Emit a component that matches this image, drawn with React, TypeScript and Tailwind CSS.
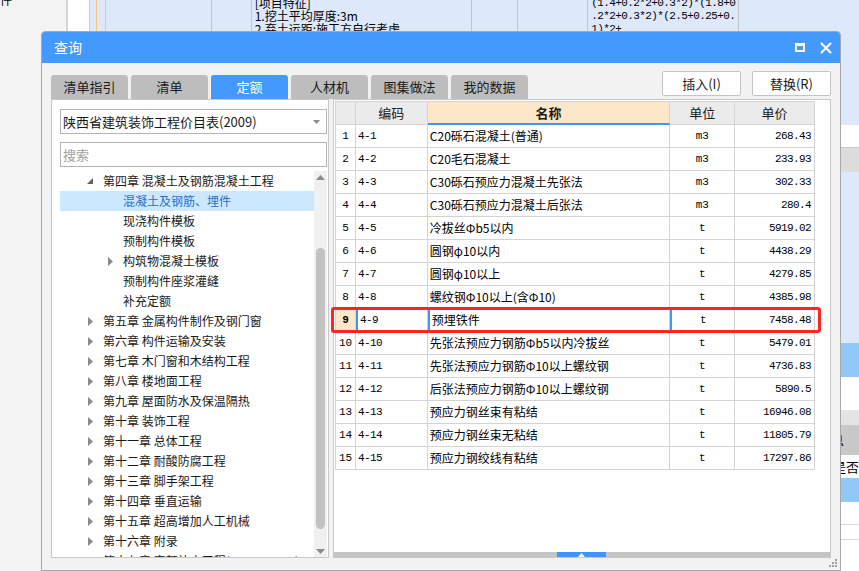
import React from "react";

const rows = [
  ["1", "4-1", "C20砾石混凝土(普通)", "m3", "268.43"],
  ["2", "4-2", "C20毛石混凝土", "m3", "233.93"],
  ["3", "4-3", "C30砾石预应力混凝土先张法", "m3", "302.33"],
  ["4", "4-4", "C30砾石预应力混凝土后张法", "m3", "280.4"],
  ["5", "4-5", "冷拔丝Φb5以内", "t", "5919.02"],
  ["6", "4-6", "圆钢φ10以内", "t", "4438.29"],
  ["7", "4-7", "圆钢φ10以上", "t", "4279.85"],
  ["8", "4-8", "螺纹钢Φ10以上(含Φ10)", "t", "4385.98"],
  ["9", "4-9", "预埋铁件", "t", "7458.48"],
  ["10", "4-10", "先张法预应力钢筋Φb5以内冷拔丝", "t", "5479.01"],
  ["11", "4-11", "先张法预应力钢筋Φ10以上螺纹钢", "t", "4736.83"],
  ["12", "4-12", "后张法预应力钢筋Φ10以上螺纹钢", "t", "5890.5"],
  ["13", "4-13", "预应力钢丝束有粘结", "t", "16946.08"],
  ["14", "4-14", "预应力钢丝束无粘结", "t", "11805.79"],
  ["15", "4-15", "预应力钢绞线有粘结", "t", "17297.86"],
];

const tree: { text: string; level: number; arrow?: "open" | "closed"; selected?: boolean }[] = [
  { text: "第四章 混凝土及钢筋混凝土工程", level: 0, arrow: "open" },
  { text: "混凝土及钢筋、埋件", level: 1, selected: true },
  { text: "现浇构件模板", level: 1 },
  { text: "预制构件模板", level: 1 },
  { text: "构筑物混凝土模板", level: 1, arrow: "closed" },
  { text: "预制构件座浆灌缝", level: 1 },
  { text: "补充定额", level: 1 },
  { text: "第五章 金属构件制作及钢门窗", level: 0, arrow: "closed" },
  { text: "第六章 构件运输及安装", level: 0, arrow: "closed" },
  { text: "第七章 木门窗和木结构工程", level: 0, arrow: "closed" },
  { text: "第八章 楼地面工程", level: 0, arrow: "closed" },
  { text: "第九章 屋面防水及保温隔热", level: 0, arrow: "closed" },
  { text: "第十章 装饰工程", level: 0, arrow: "closed" },
  { text: "第十一章 总体工程", level: 0, arrow: "closed" },
  { text: "第十二章 耐酸防腐工程", level: 0, arrow: "closed" },
  { text: "第十三章 脚手架工程", level: 0, arrow: "closed" },
  { text: "第十四章 垂直运输", level: 0, arrow: "closed" },
  { text: "第十五章 超高增加人工机械", level: 0, arrow: "closed" },
  { text: "第十六章 附录", level: 0, arrow: "closed" },
  { text: "第十七章 定额补充工程(2014、2016)", level: 0, arrow: "closed" },
];

const tabs = ["清单指引", "清单", "定额", "人材机", "图集做法", "我的数据"];

const ui = { fontFamily: '"Noto Sans CJK SC", "Noto Sans", sans-serif' };
const grid = { fontFamily: '"Liberation Mono", "Noto Sans CJK SC", monospace' };

function Background() {
  return (
    <div className="flex h-full w-full text-[12px] text-black" style={ui}>
      <div className="w-[68px] bg-[#f3f3f3] border-r-2 border-[#d4d4d4] leading-none">
        <div className="-mt-[6px]">件</div>
      </div>
      <div className="w-[22px] bg-white border-r border-[#c8c8c8]" />
      <div className="w-[7px] bg-[#dde8fa] border-r border-[#f7c27a]" />
      <div className="w-[9px] bg-[#dde8fa] border-r border-[#f7c27a]" />
      <div className="w-[106px] bg-[#dde8fa] border-r border-[#c4c4c4]" />
      <div className="w-[40px] bg-[#dde8fa] border-r border-[#c4c4c4]" />
      <div className="w-[221px] bg-[#dde8fa] border-r border-[#c4c4c4] pl-[3px] leading-[13px] pt-[-2px]">
        <div className="-mt-[4px]">[项目特征]</div>
        <div>1.挖土平均厚度:3m</div>
        <div>2.弃土运距:施工方自行考虑</div>
      </div>
      <div className="w-[46px] bg-[#dde8fa] border-r border-[#c4c4c4]" />
      <div className="w-[70px] bg-[#dde8fa] border-r border-[#c4c4c4]" />
      <div className="w-[151px] bg-[#dde8fa] border-r border-[#c4c4c4] pl-[3px] text-[11px] leading-[13px] tracking-[-0.6px]" style={grid}>
        <div className="-mt-[3px]">(1.4+0.2*2+0.3*2)*(1.8+0</div>
        <div>.2*2+0.3*2)*(2.5+0.25+0.</div>
        <div>1)*2+</div>
      </div>
      <div className="flex-1 flex flex-col">
        <div className="h-[125px] bg-[#dde8fa]" />
        <div className="h-[23px] bg-white border-b border-[#c8c8c8]" />
        <div className="h-[24px] bg-[#dcdcdc]" />
        <div className="h-[171px] bg-[#dde8fa]" />
        <div className="h-[34px] bg-[#90c8f8]" />
        <div className="h-[33px] bg-white" />
        <div className="h-[15px] bg-[#e4e4e4]" />
        <div className="h-[30px] bg-[#c8c8c8] pl-[92px] leading-[30px] text-[13px]">息</div>
        <div className="h-[23px] bg-white pl-[94px] leading-[23px] text-[13px] whitespace-nowrap overflow-hidden">是否</div>
        <div className="h-[24px] bg-[#90c8f8]" />
        <div className="h-[23px] bg-white border-b border-[#d8d8d8]" />
        <div className="h-[15px] bg-white border-b border-[#d8d8d8]" />
        <div className="flex-1 bg-white" />
      </div>
    </div>
  );
}

function TreePanel() {
  return (
    <div className="w-[278px] h-full bg-white border border-[#c8c8c8] flex flex-col pl-[8px] pr-[1px]">
      <div className="mt-[9px] h-[25px] border border-[#b4b4b4] flex items-center justify-between pl-[2px] pr-[6px] text-[13px] text-[#1a1a1a]">
        <span>陕西省建筑装饰工程价目表(2009)</span>
        <svg width="7" height="4" viewBox="0 0 7 4"><path d="M0 0 L7 0 L3.5 4 Z" fill="#8a8a8a" /></svg>
      </div>
      <div className="mt-[8px] h-[25px] border border-[#b4b4b4] flex items-center pl-[2px] text-[13px] text-[#a0a0a0]">搜索</div>
      <div className="flex-1 flex mt-[4px] overflow-hidden">
        <div className="flex-1 overflow-hidden">
          {tree.map((t, i) => (
            <div
              key={i}
              className={`h-[20px] flex items-center text-[12px] whitespace-nowrap ${t.selected ? "bg-[#cce8ff] text-[#2a6fc9]" : "text-[#1a1a1a]"}`}
            >
              <div className={`${t.level === 0 ? "w-[43px]" : "w-[63px]"} flex justify-end pr-[10px] shrink-0`}>
                {t.arrow === "open" && (
                  <svg width="6" height="6" viewBox="0 0 6 6"><path d="M6 0 L6 6 L0 6 Z" fill="#606060" /></svg>
                )}
                {t.arrow === "closed" && (
                  <svg width="5" height="9" viewBox="0 0 5 9"><path d="M0 0 L5 4.5 L0 9 Z" fill="#8a8a8a" /></svg>
                )}
              </div>
              <span>{t.text}</span>
            </div>
          ))}
        </div>
        <div className="w-[13px] bg-[#f0f0f0] flex flex-col items-center">
          <svg className="mt-[4px]" width="9" height="5" viewBox="0 0 9 5"><path d="M0 5 L4.5 0 L9 5 Z" fill="#8a8a8a" /></svg>
          <div className="mt-[68px] w-[9px] h-[281px] rounded-[5px] bg-[#c2c2c2]" />
          <div className="flex-1" />
          <svg className="mb-[3px]" width="9" height="5" viewBox="0 0 9 5"><path d="M0 0 L4.5 5 L9 0 Z" fill="#8a8a8a" /></svg>
        </div>
      </div>
    </div>
  );
}

function GridPanel() {
  const cell = "border-r border-b border-[#d4d4d4] h-[23px] flex items-center";
  return (
    <div className="relative w-[498px] h-full bg-white border border-[#c8c8c8] flex flex-col">
      <div className="pt-[1px] pl-[1px] flex-1">
        <div className="flex w-[480px] text-[13px] text-[#1a1a1a] border-l border-t border-[#d4d4d4]" style={ui}>
          <div className={`${cell} w-[20px] bg-[#ebebeb]`} />
          <div className={`${cell} w-[72px] bg-[#ebebeb] justify-center`}>编码</div>
          <div className={`w-[243px] h-[23px] bg-[#fde7c9] border-r border-[#d4d4d4] border-b-2 border-b-[#3d96f8] flex items-center justify-center font-bold`}>名称</div>
          <div className={`${cell} w-[65px] bg-[#ebebeb] justify-center`}>单位</div>
          <div className={`${cell} w-[80px] bg-[#ebebeb] justify-center`}>单价</div>
        </div>
        {rows.map((r) => {
          const sel = r[0] === "9";
          return (
            <div key={r[0]} className="flex w-[480px] text-[12px] text-black border-l border-[#d4d4d4]">
              <div className={`${cell} w-[20px] justify-center text-[11px] ${sel ? "bg-[#fde7c9] font-bold" : ""}`} style={grid}>{r[0]}</div>
              <div className={`${cell} w-[72px] pl-[2px] text-[11px] tracking-[-0.6px] ${sel ? "border-l-2 border-l-[#3d96f8]" : ""}`} style={grid}>{r[1]}</div>
              <div className={`${cell} w-[243px] pl-[2px] whitespace-nowrap overflow-hidden ${sel ? "border-l-2 border-l-[#3d96f8]" : ""}`} style={ui}>{r[2]}</div>
              <div className={`${cell} w-[65px] justify-center text-[11px] ${sel ? "border-l-2 border-l-[#3d96f8]" : ""}`} style={grid}>{r[3]}</div>
              <div className={`${cell} w-[80px] justify-end pr-[3px] text-[11px] tracking-[-0.6px]`} style={grid}>{r[4]}</div>
            </div>
          );
        })}
      </div>
      <div className="h-[5px] mb-[0px] bg-[#c4c4c4] flex">
        <div className="w-[223px]" />
        <div className="w-[49px] bg-[#3d96f8] flex items-center justify-center">
          <svg width="7" height="4" viewBox="0 0 7 4"><path d="M0 4 L3.5 0 L7 4 Z" fill="#fff" /></svg>
        </div>
      </div>
      <div className="absolute left-[-3px] top-[207px] w-[490px] h-[26px] border-[3px] border-[#ff2424] rounded-[3px]" />
    </div>
  );
}

function Dialog() {
  return (
    <div className="absolute left-[41px] top-[31px] w-[800px] h-[540px] bg-[#f2f2f2] border border-[#a8a8a8] rounded-t-[4px] flex flex-col overflow-hidden" style={ui}>
      <div className="h-[31px] bg-[#4499ff] flex items-center justify-between pl-[12px] pr-[8px] text-white text-[14px]">
        <span>查询</span>
        <div className="flex items-center gap-[15px]">
          <div className="w-[10px] h-[9px] border-2 border-t-[3px] border-white" />
          <svg width="12" height="12" viewBox="0 0 12 12"><path d="M1 1 L11 11 M11 1 L1 11" stroke="#fff" strokeWidth="2.2" /></svg>
        </div>
      </div>
      <div className="flex items-end justify-between pl-[9px] pr-[9px] h-[36px]">
        <div className="flex gap-[3px]">
          {tabs.map((t) => (
            <div
              key={t}
              className={`w-[77px] h-[24px] rounded-t-[3px] flex items-center justify-center text-[13px] ${t === "定额" ? "bg-[#4499ff] text-white" : "bg-[#bdbdbd] text-[#1a1a1a]"}`}
            >
              {t}
            </div>
          ))}
        </div>
        <div className="flex gap-[11px] mb-[3px]">
          <div className="w-[79px] h-[25px] bg-white border border-[#c4c4c4] rounded-[2px] flex items-center justify-center text-[13px] text-[#1a1a1a]">插入(I)</div>
          <div className="w-[79px] h-[25px] bg-white border border-[#c4c4c4] rounded-[2px] flex items-center justify-center text-[13px] text-[#1a1a1a]">替换(R)</div>
        </div>
      </div>
      <div className="flex pl-[9px] gap-[4px] h-[459px]">
        <TreePanel />
        <GridPanel />
      </div>
      <div className="flex-1 flex justify-end items-end pr-[3px] pb-[3px]">
        <svg width="8" height="8" viewBox="0 0 8 8" fill="#a0a0a0">
          <rect x="6" y="0" width="2" height="2" />
          <rect x="3" y="3" width="2" height="2" />
          <rect x="6" y="3" width="2" height="2" />
          <rect x="0" y="6" width="2" height="2" />
          <rect x="3" y="6" width="2" height="2" />
          <rect x="6" y="6" width="2" height="2" />
        </svg>
      </div>
    </div>
  );
}

export default function App() {
  return (
    <div className="relative w-[859px] h-[571px] overflow-hidden bg-white">
      <Background />
      <Dialog />
    </div>
  );
}
